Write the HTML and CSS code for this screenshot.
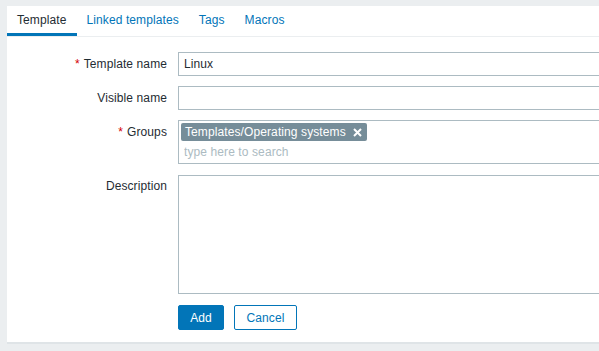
FILE: index.html
```html
<!DOCTYPE html>
<html lang="en">
<head>
  <meta charset="UTF-8" />
  <title>Template</title>
  <link rel="stylesheet" href="styles.css">
</head>
<body>
  <div class="container">
    <ul class="tabs">
      <li class="tab active">Template</li>
      <li class="tab">Linked templates</li>
      <li class="tab">Tags</li>
      <li class="tab">Macros</li>
    </ul>

    <form class="form">
      <label class="form-label required" for="name">Template name</label>
      <div class="form-field">
        <input type="text" id="name" class="text-input" value="Linux" />
      </div>

      <label class="form-label" for="visible">Visible name</label>
      <div class="form-field">
        <input type="text" id="visible" class="text-input" />
      </div>

      <label class="form-label required">Groups</label>
      <div class="form-field">
        <div class="multiselect">
          <div class="chips">
            <span class="chip">Templates/Operating systems
              <svg class="chip-x" width="9" height="9" viewBox="0 0 9 9"><path d="M1 1 L8 8 M8 1 L1 8" stroke="#fff" stroke-width="2"/></svg>
            </span>
          </div>
          <input type="text" class="ms-search" placeholder="type here to search" />
        </div>
      </div>

      <label class="form-label" for="desc">Description</label>
      <div class="form-field">
        <textarea id="desc" class="textarea"></textarea>
      </div>

      <div></div>
      <div class="form-buttons">
        <button type="button" class="btn btn-primary">Add</button>
        <button type="button" class="btn btn-alt">Cancel</button>
      </div>
    </form>
  </div>
</body>
</html>
```

FILE: styles.css
```css
* {
  margin: 0;
  padding: 0;
  box-sizing: border-box;
  font-family: 'Liberation Sans', Arial, sans-serif;
}

body {
  background-color: #ebeef0;
  color: #1f2c33;
  font-size: 12px;
  letter-spacing: 0.1px;
  padding: 6px 0 0 7px;
  overflow: hidden;
}

.container {
  background-color: #fff;
  border-bottom: 2px solid #dfe4e7;
  width: calc(100vw - 7px);
  height: 338px;
  overflow: hidden;
}

.tabs {
  list-style: none;
  display: flex;
  height: 31px;
  border-bottom: 1px solid #ebeef0;
}

.tab {
  padding: 2px 10px 0;
  line-height: 25px;
  color: #0275b8;
  border-bottom: 3px solid transparent;
  height: 30px;
}

.tab.active {
  color: #1f2c33;
  border-bottom-color: #0275b8;
}

.form {
  display: grid;
  grid-template-columns: 160px 1fr;
  column-gap: 11px;
  row-gap: 10px;
  padding-top: 15px;
}

.form-label {
  text-align: right;
  line-height: 24px;
}

.form-label.required::before {
  content: "*";
  color: #d40000;
  margin-right: 4px;
}

.text-input {
  width: 453px;
  height: 24px;
  border: 1px solid #acbbc2;
  padding: 0 5px;
  font-size: 12px;
  letter-spacing: 0.1px;
  color: #1f2c33;
  outline: none;
}

.multiselect {
  width: 453px;
  height: 44px;
  border: 1px solid #acbbc2;
  padding: 2px 2px 0;
}

.chips {
  display: flex;
}

.chip {
  display: flex;
  align-items: center;
  gap: 7px;
  background-color: #768d99;
  color: #fff;
  border-radius: 2px;
  height: 18px;
  padding: 0 5px 0 4px;
  line-height: 18px;
}

.ms-search {
  display: block;
  border: none;
  outline: none;
  font-size: 12px;
  letter-spacing: 0.1px;
  padding: 0 3px;
  height: 21px;
  width: 100%;
}

.ms-search::placeholder {
  color: #acbbc2;
}

.textarea {
  display: block;
  width: 453px;
  height: 119px;
  border: 1px solid #acbbc2;
  resize: none;
  outline: none;
  margin-top: 1px;
}

.form-buttons {
  display: flex;
  gap: 10px;
  margin-top: 1px;
}

.btn {
  height: 25px;
  padding: 0 10px;
  font-size: 12px;
  letter-spacing: 0.1px;
  border-radius: 2px;
  cursor: pointer;
}

.btn-primary {
  width: 46px;
  background-color: #0275b8;
  border: 1px solid #0275b8;
  color: #fff;
}

.btn-alt {
  width: 63px;
  background-color: #fff;
  border: 1px solid #0275b8;
  color: #0275b8;
}
```
